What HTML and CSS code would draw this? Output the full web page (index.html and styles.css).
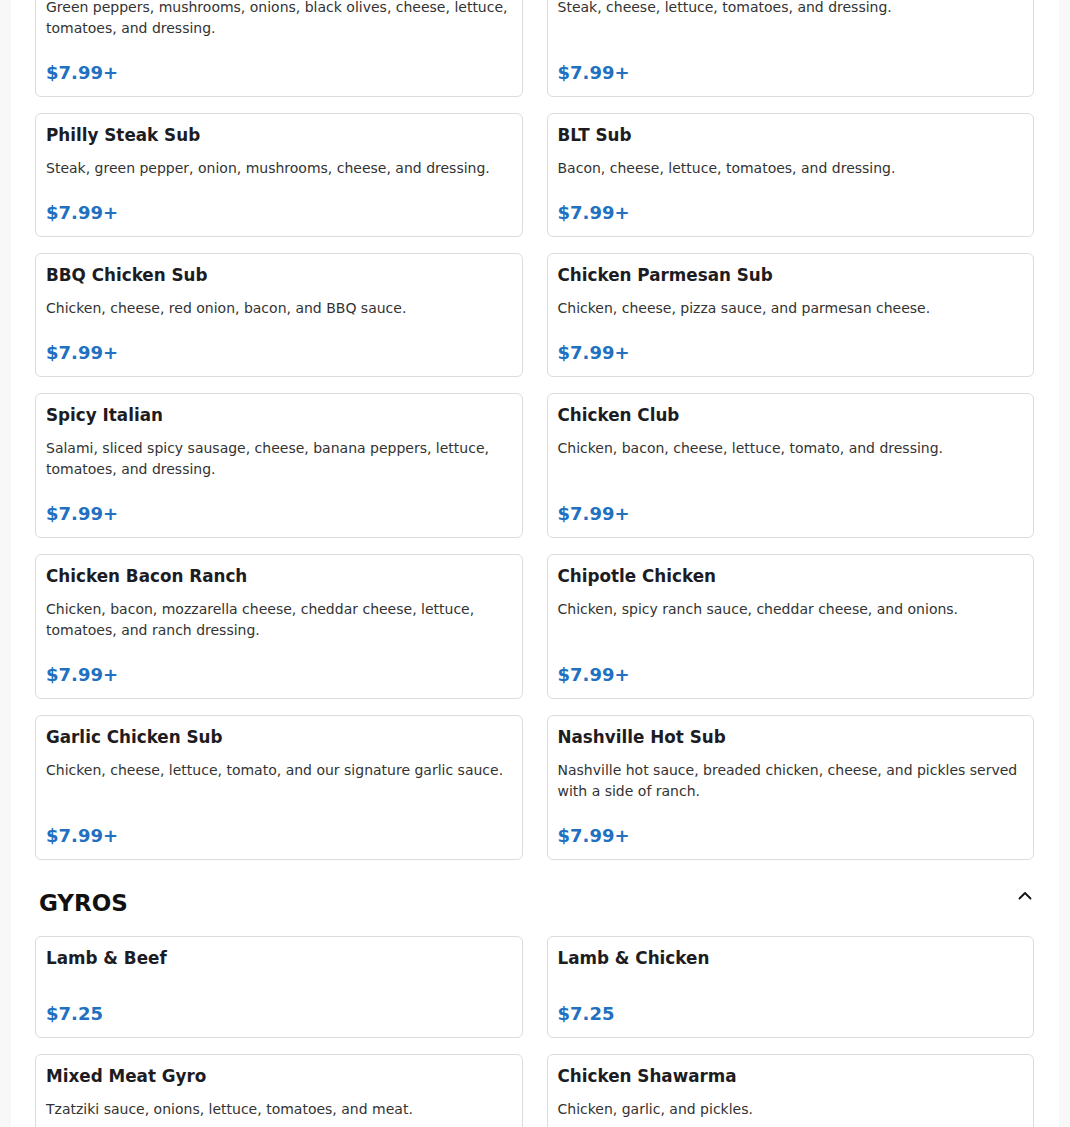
FILE: index.html
```html
<!DOCTYPE html>
<html lang="en">
<head>
<meta charset="utf-8">
<title>Menu</title>
<link rel="stylesheet" href="styles.css">
</head>
<body>
<main class="page">
  <section class="section section-subs">
    <div class="grid">
      <article class="card"><h3 class="card-title">Veggie Sub</h3><p class="card-desc">Green peppers, mushrooms, onions, black olives, cheese, lettuce, tomatoes, and dressing.</p><div class="card-price">$7.99+</div></article>
      <article class="card"><h3 class="card-title">Steak Sub</h3><p class="card-desc">Steak, cheese, lettuce, tomatoes, and dressing.</p><div class="card-price">$7.99+</div></article>
      <article class="card"><h3 class="card-title">Philly Steak Sub</h3><p class="card-desc">Steak, green pepper, onion, mushrooms, cheese, and dressing.</p><div class="card-price">$7.99+</div></article>
      <article class="card"><h3 class="card-title">BLT Sub</h3><p class="card-desc">Bacon, cheese, lettuce, tomatoes, and dressing.</p><div class="card-price">$7.99+</div></article>
      <article class="card"><h3 class="card-title">BBQ Chicken Sub</h3><p class="card-desc">Chicken, cheese, red onion, bacon, and BBQ sauce.</p><div class="card-price">$7.99+</div></article>
      <article class="card"><h3 class="card-title">Chicken Parmesan Sub</h3><p class="card-desc">Chicken, cheese, pizza sauce, and parmesan cheese.</p><div class="card-price">$7.99+</div></article>
      <article class="card"><h3 class="card-title">Spicy Italian</h3><p class="card-desc">Salami, sliced spicy sausage, cheese, banana peppers, lettuce, tomatoes, and dressing.</p><div class="card-price">$7.99+</div></article>
      <article class="card"><h3 class="card-title">Chicken Club</h3><p class="card-desc">Chicken, bacon, cheese, lettuce, tomato, and dressing.</p><div class="card-price">$7.99+</div></article>
      <article class="card"><h3 class="card-title">Chicken Bacon Ranch</h3><p class="card-desc">Chicken, bacon, mozzarella cheese, cheddar cheese, lettuce, tomatoes, and ranch dressing.</p><div class="card-price">$7.99+</div></article>
      <article class="card"><h3 class="card-title">Chipotle Chicken</h3><p class="card-desc">Chicken, spicy ranch sauce, cheddar cheese, and onions.</p><div class="card-price">$7.99+</div></article>
      <article class="card"><h3 class="card-title">Garlic Chicken Sub</h3><p class="card-desc">Chicken, cheese, lettuce, tomato, and our signature garlic sauce.</p><div class="card-price">$7.99+</div></article>
      <article class="card"><h3 class="card-title">Nashville Hot Sub</h3><p class="card-desc">Nashville hot sauce, breaded chicken, cheese, and pickles served with a side of ranch.</p><div class="card-price">$7.99+</div></article>
    </div>
  </section>
  <section class="section">
    <header class="section-header">
      <h2 class="section-title">GYROS</h2>
      <button class="toggle" aria-label="Collapse">
        <svg width="16" height="16" viewBox="0 0 16 16" aria-hidden="true"><polyline points="2.5,10.5 8,5 13.5,10.5" fill="none" stroke="#111" stroke-width="1.8" stroke-linecap="round" stroke-linejoin="round"/></svg>
      </button>
    </header>
    <div class="grid">
      <article class="card"><h3 class="card-title">Lamb &amp; Beef</h3><div class="card-price">$7.25</div></article>
      <article class="card"><h3 class="card-title">Lamb &amp; Chicken</h3><div class="card-price">$7.25</div></article>
      <article class="card"><h3 class="card-title">Mixed Meat Gyro</h3><p class="card-desc">Tzatziki sauce, onions, lettuce, tomatoes, and meat.</p><div class="card-price">$7.25</div></article>
      <article class="card"><h3 class="card-title">Chicken Shawarma</h3><p class="card-desc">Chicken, garlic, and pickles.</p><div class="card-price">$7.25</div></article>
    </div>
  </section>
</main>
</body>
</html>
```

FILE: styles.css
```css
* { box-sizing: border-box; }

html, body {
  margin: 0;
  padding: 0;
}

body {
  background: #f8f8f8;
  font-family: "DejaVu Sans", Verdana, sans-serif;
  color: #222;
}

.page {
  background: #fff;
  margin: 0 11px;
  padding: 0 25px 0 24px;
  min-height: 1127px;
}

.section-subs {
  margin-top: -48px;
}

.grid {
  display: grid;
  grid-template-columns: 1fr 1fr;
  column-gap: 24px;
  row-gap: 16px;
}

.card {
  display: flex;
  flex-direction: column;
  border: 1px solid #dcdcdc;
  border-radius: 6px;
  padding: 10px;
  background: #fff;
}

.card-title {
  margin: 0 0 12px;
  font-size: 16.8px;
  line-height: 22px;
  font-weight: 700;
  color: #1c1c22;
}

.card-desc {
  margin: 0 0 1px;
  font-size: 14px;
  line-height: 21px;
  color: #333;
}

.card-price {
  margin-top: auto;
  padding-top: 19px;
  font-size: 18px;
  line-height: 27px;
  font-weight: 700;
  color: #2270c0;
}

.section-header {
  display: flex;
  justify-content: space-between;
  align-items: flex-start;
  padding: 26px 1px 16px 4px;
}

.section-title {
  margin: 0;
  font-size: 23px;
  line-height: 34px;
  font-weight: 700;
  color: #111;
}

.toggle {
  display: flex;
  margin-top: 2px;
  padding: 0;
  border: 0;
  background: none;
  cursor: pointer;
}
```
